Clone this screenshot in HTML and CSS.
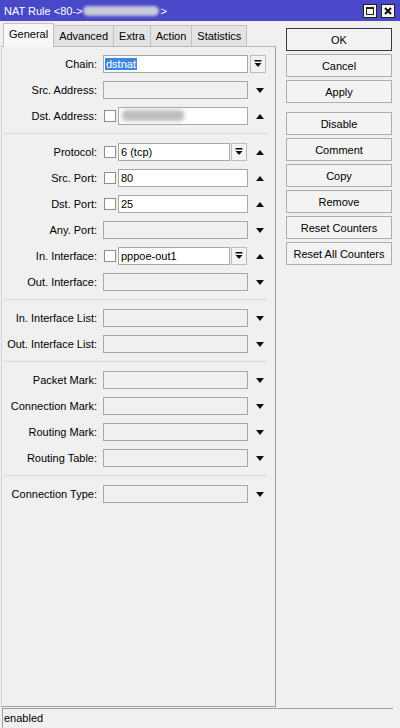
FILE: index.html
```html
<!DOCTYPE html>
<html lang="en">
<head>
  <meta charset="UTF-8">
  <title>NAT Rule</title>
  <link rel="stylesheet" href="styles.css">
</head>
<body>
  <div class="window">
    <div class="titlebar">
      <span class="title">NAT Rule &lt;80-&gt;<span class="smudge"></span>&gt;</span>
      <span class="tbtn">
        <svg width="10" height="10" viewBox="0 0 10 10"><rect x="1.5" y="1.5" width="7" height="7" fill="none" stroke="#222"/><rect x="1" y="1" width="8" height="2" fill="#222"/></svg>
      </span>
      <span class="tbtn">
        <svg width="10" height="10" viewBox="0 0 10 10"><path d="M2 2L8 8M8 2L2 8" stroke="#111" stroke-width="2"/></svg>
      </span>
    </div>

    <div class="main">
      <div class="left">
        <div class="tabs">
          <span class="tab active">General</span>
          <span class="tab">Advanced</span>
          <span class="tab">Extra</span>
          <span class="tab">Action</span>
          <span class="tab">Statistics</span>
        </div>
        <div class="panel">
          <div class="row">
            <span class="lbl">Chain:</span>
            <div class="fld"><span class="inp on"><span class="sel">dstnat</span></span></div>
            <div class="tail"><span class="combo"><svg width="8" height="8" viewBox="0 0 8 8"><rect x="0.5" y="0" width="7" height="1.5" fill="#111"/><path d="M0.5 3H7.5L4 7Z" fill="#111"/></svg></span></div>
          </div>
          <div class="row">
            <span class="lbl">Src. Address:</span>
            <div class="fld"><span class="inp"></span></div>
            <div class="tail"><i class="down"></i></div>
          </div>
          <div class="row">
            <span class="lbl">Dst. Address:</span>
            <div class="fld"><span class="chk"></span><span class="inp on"><span class="blob"></span></span></div>
            <div class="tail"><i class="up"></i></div>
          </div>
          <div class="sep"></div>

          <div class="row">
            <span class="lbl">Protocol:</span>
            <div class="fld"><span class="chk"></span><span class="inp on">6 (tcp)</span><span class="combo"><svg width="8" height="8" viewBox="0 0 8 8"><rect x="0.5" y="0" width="7" height="1.5" fill="#111"/><path d="M0.5 3H7.5L4 7Z" fill="#111"/></svg></span></div>
            <div class="tail"><i class="up"></i></div>
          </div>
          <div class="row">
            <span class="lbl">Src. Port:</span>
            <div class="fld"><span class="chk"></span><span class="inp on">80</span></div>
            <div class="tail"><i class="up"></i></div>
          </div>
          <div class="row">
            <span class="lbl">Dst. Port:</span>
            <div class="fld"><span class="chk"></span><span class="inp on">25</span></div>
            <div class="tail"><i class="up"></i></div>
          </div>
          <div class="row">
            <span class="lbl">Any. Port:</span>
            <div class="fld"><span class="inp"></span></div>
            <div class="tail"><i class="down"></i></div>
          </div>
          <div class="row">
            <span class="lbl">In. Interface:</span>
            <div class="fld"><span class="chk"></span><span class="inp on">pppoe-out1</span><span class="combo"><svg width="8" height="8" viewBox="0 0 8 8"><rect x="0.5" y="0" width="7" height="1.5" fill="#111"/><path d="M0.5 3H7.5L4 7Z" fill="#111"/></svg></span></div>
            <div class="tail"><i class="up"></i></div>
          </div>
          <div class="row">
            <span class="lbl">Out. Interface:</span>
            <div class="fld"><span class="inp"></span></div>
            <div class="tail"><i class="down"></i></div>
          </div>
          <div class="sep"></div>

          <div class="row">
            <span class="lbl">In. Interface List:</span>
            <div class="fld"><span class="inp"></span></div>
            <div class="tail"><i class="down"></i></div>
          </div>
          <div class="row">
            <span class="lbl">Out. Interface List:</span>
            <div class="fld"><span class="inp"></span></div>
            <div class="tail"><i class="down"></i></div>
          </div>
          <div class="sep"></div>

          <div class="row">
            <span class="lbl">Packet Mark:</span>
            <div class="fld"><span class="inp"></span></div>
            <div class="tail"><i class="down"></i></div>
          </div>
          <div class="row">
            <span class="lbl">Connection Mark:</span>
            <div class="fld"><span class="inp"></span></div>
            <div class="tail"><i class="down"></i></div>
          </div>
          <div class="row">
            <span class="lbl">Routing Mark:</span>
            <div class="fld"><span class="inp"></span></div>
            <div class="tail"><i class="down"></i></div>
          </div>
          <div class="row">
            <span class="lbl">Routing Table:</span>
            <div class="fld"><span class="inp"></span></div>
            <div class="tail"><i class="down"></i></div>
          </div>
          <div class="sep"></div>

          <div class="row">
            <span class="lbl">Connection Type:</span>
            <div class="fld"><span class="inp"></span></div>
            <div class="tail"><i class="down"></i></div>
          </div>
        </div>
      </div>

      <div class="buttons">
        <div class="btn def">OK</div>
        <div class="btn">Cancel</div>
        <div class="btn gap">Apply</div>
        <div class="btn">Disable</div>
        <div class="btn">Comment</div>
        <div class="btn">Copy</div>
        <div class="btn">Remove</div>
        <div class="btn">Reset Counters</div>
        <div class="btn">Reset All Counters</div>
      </div>
    </div>

    <div class="statusbar">
      <span class="status">enabled</span>
    </div>
  </div>
</body>
</html>
```

FILE: styles.css
```css
body {
  margin: 0;
  font-family: "Liberation Sans", Arial, sans-serif;
  font-size: 11px;
  color: #000;
  background-color: #f0f0f0;
}
.window {
  width: 400px;
  height: 728px;
  display: flex;
  flex-direction: column;
  overflow: hidden;
}

/* title bar */
.titlebar {
  height: 21px;
  flex: none;
  display: flex;
  align-items: center;
  padding: 0 5px 0 4px;
  background-color: #4848c9;
  color: #fff;
}
.title {
  flex: 1;
  display: flex;
  align-items: center;
}
.smudge {
  display: inline-block;
  width: 76px;
  height: 10px;
  margin: 0 1px;
  background: #c9c9dc;
  border-radius: 6px;
  filter: blur(1.5px);
}
.tbtn {
  width: 14px;
  height: 14px;
  box-sizing: border-box;
  margin-left: 4px;
  border: 1px solid #222;
  background: #f4f4f4;
  display: flex;
  align-items: center;
  justify-content: center;
}

/* body */
.main {
  flex: 1;
  min-height: 0;
  display: flex;
  padding: 2px 0 1px;
}
.left {
  width: 275px;
  margin-left: 1px;
  display: flex;
  flex-direction: column;
}
.tabs {
  height: 24px;
  flex: none;
  display: flex;
  align-items: flex-end;
  padding-left: 2px;
  position: relative;
  z-index: 1;
}
.tab {
  height: 22px;
  box-sizing: border-box;
  padding: 0 5px;
  margin-right: -1px;
  line-height: 20px;
  border: 1px solid #c2c2c2;
  border-bottom-color: #b8b8b8;
  background: #e3e3e3;
}
.tab.active {
  height: 24px;
  line-height: 21px;
  border-bottom: none;
  background: #f7f7f7;
}
.panel {
  flex: 1;
  margin-top: -1px;
  padding-top: 8px;
  border: 1px solid;
  border-color: #b8b8b8 #a0a0a0 #a0a0a0 #d4d4d4;
}

/* form rows */
.row {
  display: flex;
  align-items: center;
  height: 18px;
  margin-bottom: 8px;
}
.lbl {
  width: 95px;
  flex: none;
  margin-right: 6px;
  text-align: right;
  white-space: nowrap;
}
.fld {
  width: 145px;
  height: 18px;
  flex: none;
  display: flex;
  align-items: center;
}
.inp {
  flex: 1;
  height: 18px;
  box-sizing: border-box;
  padding-left: 2px;
  line-height: 16px;
  border: 1px solid #a8a8a8;
  background: #f0f0f0;
}
.inp.on {
  background: #fff;
}
.sel {
  margin-left: -1px;
  padding: 0 1px;
  background: #3d86dd;
  color: #fff;
}
.blob {
  display: block;
  width: 62px;
  height: 11px;
  margin: 2px 0 0 1px;
  background: #bcbcbc;
  border-radius: 4px;
  filter: blur(2px);
}
.chk {
  width: 12px;
  height: 12px;
  flex: none;
  box-sizing: border-box;
  margin: 0 2px 0 1px;
  border: 1px solid #8e8e8e;
  background: #fff;
}
.combo {
  width: 16px;
  height: 18px;
  flex: none;
  box-sizing: border-box;
  margin: 0 1px;
  border: 1px solid #bdbdbd;
  background: #f3f3f3;
  display: flex;
  align-items: center;
  justify-content: center;
}
.tail {
  width: 20px;
  flex: none;
  display: flex;
  align-items: center;
}
.tail .combo {
  margin-left: 2px;
}
.down, .up {
  width: 0;
  height: 0;
  margin-left: 8px;
  border-left: 4px solid transparent;
  border-right: 4px solid transparent;
}
.down {
  border-top: 5px solid #111;
}
.up {
  border-bottom: 5px solid #111;
}
.sep {
  height: 1px;
  margin: 0 8px 9px 2px;
  background: #d8d8d8;
}

/* buttons */
.buttons {
  width: 106px;
  margin-left: 10px;
  padding-top: 5px;
  display: flex;
  flex-direction: column;
}
.btn {
  height: 23px;
  box-sizing: border-box;
  margin-bottom: 3px;
  border: 1px solid #adadad;
  background: #f3f3f3;
  display: flex;
  align-items: center;
  justify-content: center;
}
.btn.def {
  border-color: #3a3a3a;
}
.btn.gap {
  margin-bottom: 9px;
}

/* status bar */
.statusbar {
  height: 20px;
  flex: none;
  display: flex;
}
.status {
  width: 389px;
  margin-left: 2px;
  padding-left: 1px;
  line-height: 18px;
  border-top: 1px solid #a0a0a0;
  border-left: 1px solid #a0a0a0;
}
```
